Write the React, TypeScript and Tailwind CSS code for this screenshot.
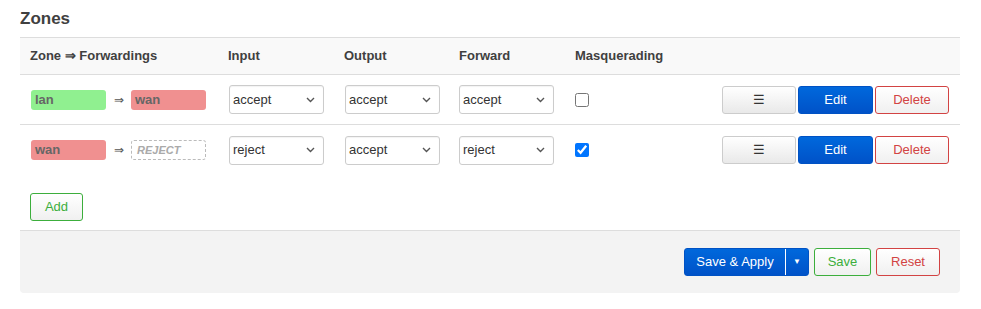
import React from 'react';

const font = { fontFamily: '"Liberation Sans", Arial, sans-serif' };

function Chevron() {
  return (
    <svg width="9" height="6" viewBox="0 0 9 6" className="text-[#555]">
      <path d="M1 1l3.5 3.5L8 1" fill="none" stroke="currentColor" strokeWidth="1.4" />
    </svg>
  );
}

function Select({ value }: { value: string }) {
  return (
    <div className="flex h-[29px] w-[95px] items-center justify-between rounded-[3px] border border-[#ccc] bg-white pl-[3px] pr-[8px] text-[13px] text-[#333] shadow-[inset_0_1px_1px_rgba(0,0,0,0.05)]">
      <span>{value}</span>
      <Chevron />
    </div>
  );
}

function Badge({ name, color }: { name: string; color: string }) {
  return (
    <span
      className={`inline-flex h-[20px] w-[75px] items-center rounded-[3px] pl-[4px] text-[13px] font-bold text-[#666] ${color}`}
    >
      {name}
    </span>
  );
}

const grayBtn =
  'flex h-[28px] items-center justify-center rounded-[3px] border border-[#ccc] bg-gradient-to-b from-white to-[#e9e9e9] text-[13px] text-[#333]';
const blueBtn =
  'flex h-[28px] items-center justify-center rounded-[3px] border border-[#0052c4] bg-gradient-to-b from-[#0068dc] to-[#0052c8] text-[13px] text-white';
const redBtn =
  'flex h-[28px] items-center justify-center rounded-[3px] border border-[#d24343] bg-gradient-to-b from-white to-[#f0f0f0] text-[13px] text-[#d24343]';
const greenBtn =
  'flex h-[28px] items-center justify-center rounded-[3px] border border-[#3cae3c] bg-gradient-to-b from-white to-[#f0f0f0] text-[13px] text-[#3cae3c]';

type Row = {
  zone: string;
  zoneColor: string;
  dest: string | null;
  destColor?: string;
  input: string;
  output: string;
  forward: string;
  masq: boolean;
};

const rows: Row[] = [
  { zone: 'lan', zoneColor: 'bg-[#90f090]', dest: 'wan', destColor: 'bg-[#f09090]', input: 'accept', output: 'accept', forward: 'accept', masq: false },
  { zone: 'wan', zoneColor: 'bg-[#f09090]', dest: null, input: 'reject', output: 'accept', forward: 'reject', masq: true },
];

export default function App() {
  return (
    <div className="min-h-screen bg-white px-[20px] pt-[7px]" style={font}>
      <h2 className="mb-[7px] text-[17px] font-bold leading-[23px] text-[#404040]">Zones</h2>
      <div className="w-[940px]">
        <div className="flex h-[38px] items-center border-y border-[#ddd] bg-[#f9f9f9] text-[13px] font-bold text-[#404040]">
          <div className="w-[198px] pl-[10px]">Zone ⇒ Forwardings</div>
          <div className="w-[116px] pl-[10px]">Input</div>
          <div className="w-[115px] pl-[10px]">Output</div>
          <div className="w-[116px] pl-[10px]">Forward</div>
          <div className="pl-[10px]">Masquerading</div>
        </div>
        {rows.map((r, i) => (
          <div
            key={i}
            className={`flex h-[50px] items-center ${i === 0 ? 'border-b border-[#ddd]' : ''}`}
          >
            <div className="flex w-[198px] items-center pl-[11px]">
              <Badge name={r.zone} color={r.zoneColor} />
              <span className="ml-[8px] mr-[7px] text-[12px] text-[#555]">⇒</span>
              {r.dest ? (
                <Badge name={r.dest} color={r.destColor!} />
              ) : (
                <span className="inline-flex h-[20px] w-[75px] items-center rounded-[3px] border border-dashed border-[#bbb] pl-[5px] text-[11px] font-bold italic text-[#aaa]">
                  REJECT
                </span>
              )}
            </div>
            <div className="w-[116px] pl-[11px]">
              <Select value={r.input} />
            </div>
            <div className="w-[115px] pl-[11px]">
              <Select value={r.output} />
            </div>
            <div className="w-[116px] pl-[10px]">
              <Select value={r.forward} />
            </div>
            <div className="flex w-[100px] items-center pl-[10px]">
              <input type="checkbox" defaultChecked={r.masq} className="m-0 h-[14px] w-[14px]" />
            </div>
            <div className="flex flex-1 items-center justify-end gap-[2px] pr-[11px]">
              <button className={`${grayBtn} w-[74px]`}>☰</button>
              <button className={`${blueBtn} w-[75px]`}>Edit</button>
              <button className={`${redBtn} w-[74px]`}>Delete</button>
            </div>
          </div>
        ))}
        <div className="px-[10px] pb-[9px] pt-[18px]">
          <button className={`${greenBtn} h-[28px] w-[53px]`}>Add</button>
        </div>
        <div className="flex h-[63px] items-center justify-end gap-[5px] rounded-b-[4px] border-t border-[#ddd] bg-[#f3f3f3] pr-[20px]">
          <div className={`${blueBtn} w-[125px] !justify-start`}>
            <span className="w-[100px] text-center">Save &amp; Apply</span>
            <span className="h-full w-px bg-white" />
            <span className="flex-1 text-center text-[8px]">▼</span>
          </div>
          <button className={`${greenBtn} w-[57px]`}>Save</button>
          <button className={`${redBtn} w-[64px]`}>Reset</button>
        </div>
      </div>
    </div>
  );
}
